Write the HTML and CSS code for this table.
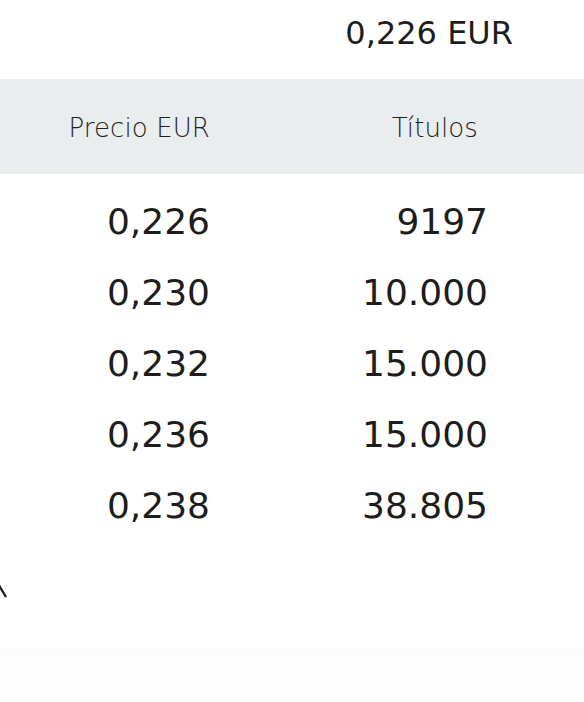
FILE: index.html
```html
<!DOCTYPE html>
<html lang="es">
<head>
<meta charset="utf-8">
<link rel="stylesheet" href="styles.css">
</head>
<body>
<div class="page">
  <div class="summary"><span class="last">0,226 EUR</span></div>
  <div class="book">
    <div class="head">
      <div class="hcell price">Precio EUR</div>
      <div class="hcell qty">Títulos</div>
    </div>
    <div class="rows">
      <div class="row"><div class="cell price">0,226</div><div class="cell qty">9197</div></div>
      <div class="row"><div class="cell price">0,230</div><div class="cell qty">10.000</div></div>
      <div class="row"><div class="cell price">0,232</div><div class="cell qty">15.000</div></div>
      <div class="row"><div class="cell price">0,236</div><div class="cell qty">15.000</div></div>
      <div class="row"><div class="cell price">0,238</div><div class="cell qty">38.805</div></div>
    </div>
    <div class="toggle">
      <svg class="chev" width="20" height="20" viewBox="0 0 20 20"><path d="M0 17 L9 2 L18 17" fill="none" stroke="#1d1d1b" stroke-width="2.4"/></svg>
    </div>
  </div>
  <div class="footer"></div>
</div>
</body>
</html>
```
FILE: styles.css
```css
html, body {
  margin: 0;
  padding: 0;
  background: #fefefe;
}
body {
  width: 584px;
  height: 702px;
  overflow: hidden;
  font-family: "DejaVu Sans", sans-serif;
  color: #1d1d1b;
}
.page {
  display: flex;
  flex-direction: column;
}
.summary {
  height: 79px;
  display: flex;
  align-items: center;
  justify-content: flex-end;
  padding-right: 71px;
  background: #ffffff;
}
.last {
  font-size: 32px;
  line-height: 1;
  margin-top: -13px;
}
.head {
  height: 95px;
  background: #e9edee;
  display: grid;
  grid-template-columns: 210px 268px;
  align-items: center;
}
.hcell {
  font-family: "DejaVu Sans", sans-serif;
  font-weight: 200;
  font-size: 26px;
  color: #1f1f1f;
  text-align: right;
  letter-spacing: 0.1px;
  margin-top: 3px;
}
.rows {
  display: flex;
  flex-direction: column;
  padding-top: 12px;
  background: #ffffff;
}
.row {
  height: 71px;
  display: grid;
  grid-template-columns: 210px 278px;
  align-items: center;
}
.cell {
  font-size: 36px;
  text-align: right;
  line-height: 1;
}
.toggle {
  height: 108px;
  background: #ffffff;
  display: flex;
  align-items: flex-start;
}
.chev {
  margin-left: -12px;
  margin-top: 39px;
}
.footer {
  border-top: 1px solid #f7f9f9;
  height: 60px;
  background: linear-gradient(#fafbfb, #fefefe 10px);
}
```
